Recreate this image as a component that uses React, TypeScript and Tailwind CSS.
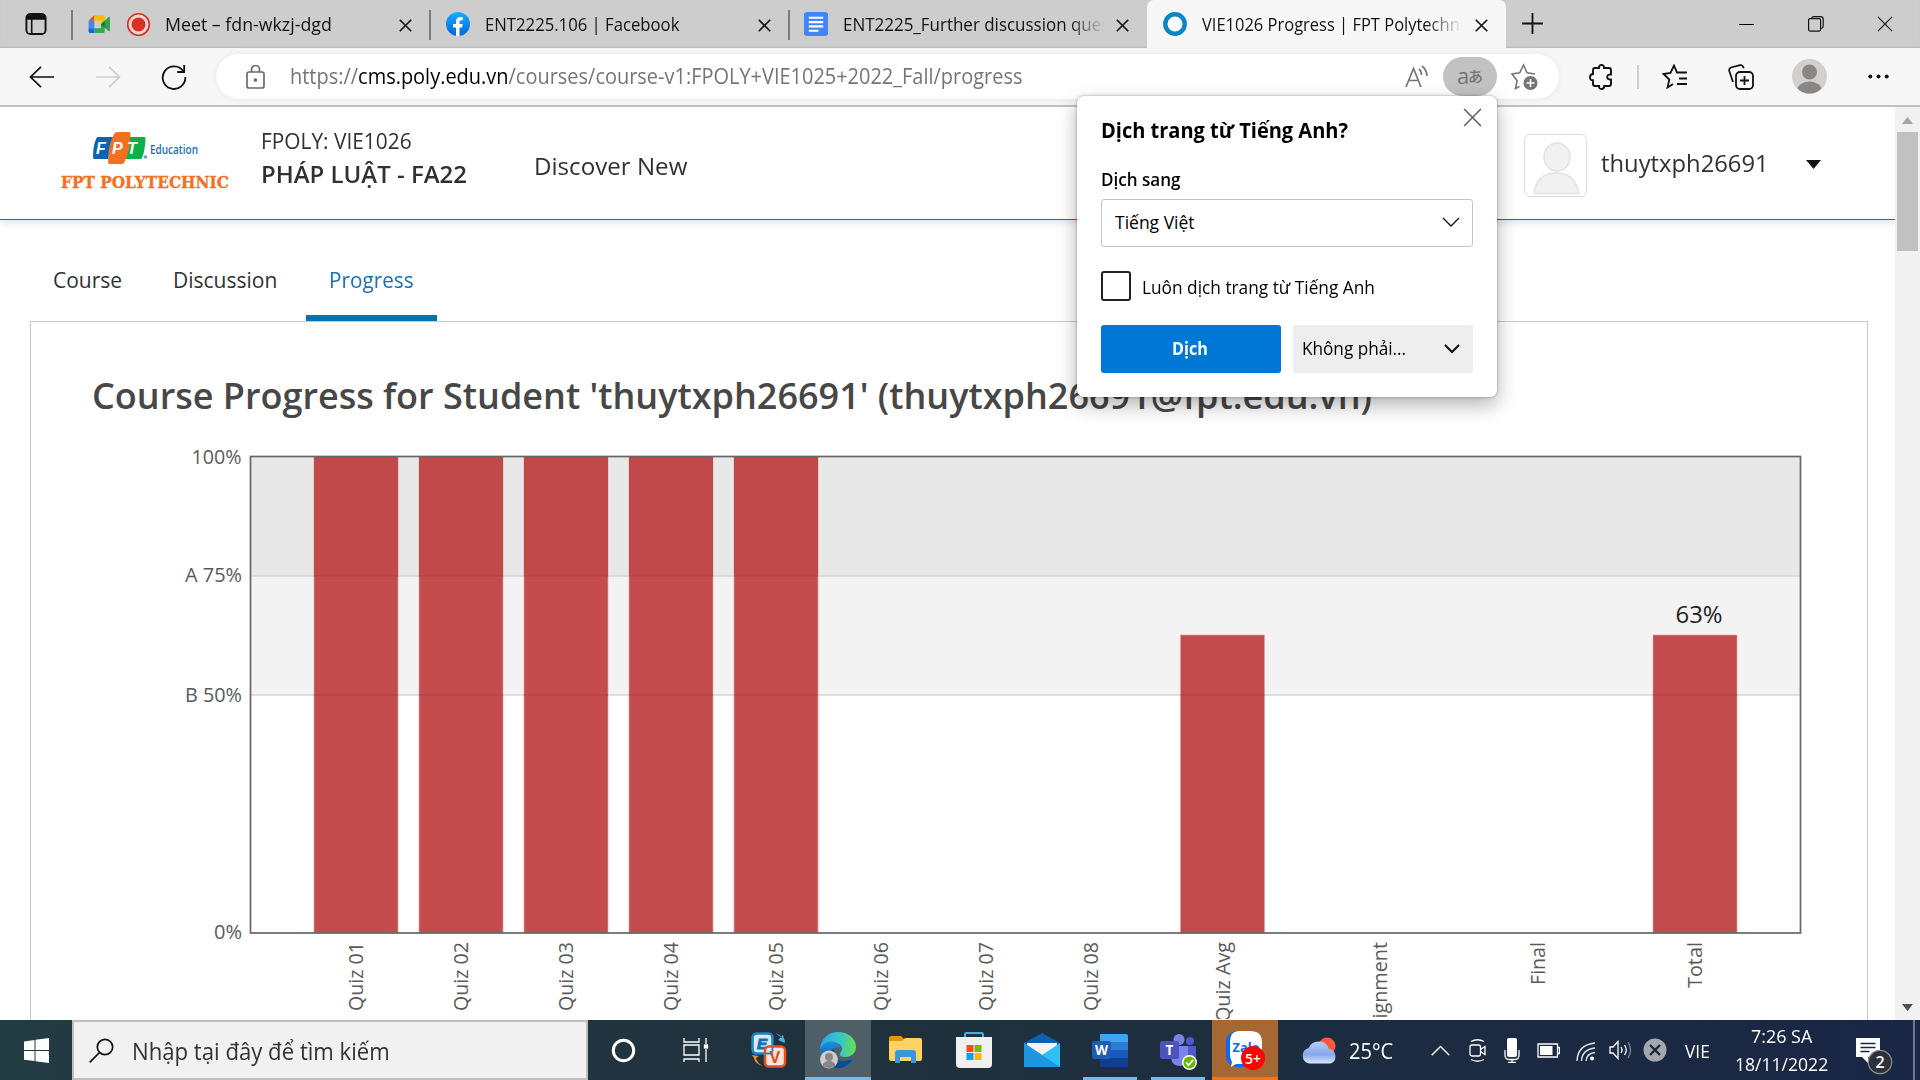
import React, { useLayoutEffect, useRef, useState } from "react";

/** Text on one line, condensed or stretched so that it takes exactly `w` pixels. */
function Fit({ w, className = "", children }: { w: number; className?: string; children: React.ReactNode }) {
  const ref = useRef<HTMLSpanElement>(null);
  const [scale, setScale] = useState(1);
  useLayoutEffect(() => {
    if (ref.current) setScale(w / ref.current.offsetWidth);
  }, [w]);
  return (
    <span className={`block shrink-0 whitespace-nowrap ${className}`} style={{ width: w }}>
      <span ref={ref} className="inline-block origin-left" style={{ transform: `scaleX(${scale})` }}>
        {children}
      </span>
    </span>
  );
}

function Cross({ size, sw = 1.8 }: { size: number; sw?: number }) {
  return (
    <svg width={size} height={size} viewBox="0 0 14 14" fill="none" stroke="currentColor" strokeWidth={sw}>
      <path d="M.8.8l12.4 12.4M13.2.8L.8 13.2" />
    </svg>
  );
}

function TabBar() {
  return (
    <div className="flex h-[48px] w-full shrink-0 bg-[#cdcdcd] text-[18.5px] leading-none text-[#111] shadow-[inset_0_-2px_2px_-1px_#b4b4b4]">
      <div className="flex w-[71px] items-center pl-[25px]">
        <svg width="22" height="22" viewBox="0 0 22 23" fill="none" stroke="#111" strokeWidth="2">
          <rect x="1" y="1" width="20" height="21" rx="4" />
          <path d="M6.5 6v16" strokeWidth="1.7" />
          <path d="M2 6V4q0-2 3-2h12q3 0 3 2v2z" fill="#111" />
        </svg>
      </div>
      <div className="flex w-[358px] items-center">
        <i className="h-[30px] mt-[2px] w-[1.500px] bg-[#7c7c7c]" />
        <svg className="ml-[15px]" width="23" height="19" viewBox="0 0 23 20">
          <path d="M0 6L6 0v6z" fill="#ea4335" />
          <path d="M6 0h9q2 0 2 2v5l-4 3V6H6z" fill="#fbbc04" />
          <path d="M0 6h6v8H0z" fill="#4285f4" />
          <path d="M0 14h6v5H2q-2 0-2-2z" fill="#1967d2" />
          <path d="M6 14h7v-4l4 3v4q0 2-2 2H6z" fill="#34a853" />
          <path d="M13 10l8-8q1.5-.6 1.5 1v13q0 1.600-1.500.8z" fill="#2fa34d" />
          <path d="M13 10l4-4v7.500z" fill="#15743a" />
        </svg>
        <svg className="ml-[15px]" width="25" height="25" viewBox="0 0 26 26">
          <circle cx="13" cy="13" r="11.200" fill="#f0d6d3" stroke="#d93025" strokeWidth="1.700" />
          <circle cx="13" cy="13" r="7.200" fill="#d93025" />
        </svg>
        <Fit w={167} className="ml-[14px]">Meet – fdn-wkzj-dgd</Fit>
        <span className="ml-auto mr-[17px] mt-[2px]"><Cross size={13} /></span>
      </div>
      <div className="flex w-[359px] items-center">
        <i className="h-[30px] mt-[2px] w-[1.500px] bg-[#7c7c7c]" />
        <svg className="ml-[15px]" width="24" height="24" viewBox="0 0 24 24">
          <defs>
            <linearGradient id="fb" x2="0" y2="1"><stop stopColor="#19aefb" /><stop offset="1" stopColor="#0563e0" /></linearGradient>
          </defs>
          <circle cx="12" cy="12" r="12" fill="url(#fb)" />
          <path d="M10 24v-8.400H7V12h3V9.600C10 6.500 11.800 5 14.500 5c.9 0 1.800.1 2.300.2v3.100h-1.500c-1.500 0-1.800.8-1.800 1.900V12h3.200l-.6 3.600h-2.600V24z" fill="#fff" />
        </svg>
        <Fit w={194} className="ml-[15px]">ENT2225.106 | Facebook</Fit>
        <span className="ml-auto mr-[17px] mt-[2px]"><Cross size={13} /></span>
      </div>
      <div className="flex w-[359px] items-center">
        <i className="h-[30px] mt-[2px] w-[1.500px] bg-[#7c7c7c]" />
        <svg className="ml-[14px]" width="24" height="24" viewBox="0 0 25 25">
          <rect width="25" height="25" rx="3" fill="#4285f4" />
          <path d="M5 6h15M5 10.500h15M5 15h15M5 19.500h10" stroke="#fff" strokeWidth="2.200" />
        </svg>
        <div className="ml-[15px] w-[262px] overflow-hidden py-[5px] [mask-image:linear-gradient(to_right,black_86%,transparent)]">
          <Fit w={266}>ENT2225_Further discussion ques</Fit>
        </div>
        <span className="ml-auto mr-[18px] mt-[2px]"><Cross size={13} /></span>
      </div>
      <div className="flex w-[359px] items-center rounded-t-[7px] bg-[#f7f7f7]">
        <svg className="ml-[16px]" width="24" height="24" viewBox="0 0 24 24">
          <circle cx="12" cy="12" r="9.700" fill="#fff" stroke="#0a86c4" strokeWidth="4.400" />
        </svg>
        <div className="ml-[15px] w-[260px] overflow-hidden py-[5px] [mask-image:linear-gradient(to_right,black_86%,transparent)]">
          <Fit w={262}>VIE1026 Progress | FPT Polytechni</Fit>
        </div>
        <span className="ml-auto mr-[18px] mt-[2px]"><Cross size={13} /></span>
      </div>
      <svg className="ml-[16px] mt-[13px]" width="21" height="21" viewBox="0 0 21 21" stroke="#111" strokeWidth="1.800">
        <path d="M10.500 0v21M0 10.500h21" />
      </svg>
      <div className="ml-auto flex items-center pr-[27px]">
        <i className="h-px w-[15px] bg-black" />
        <svg className="ml-[54px]" width="16" height="16" viewBox="0 0 16 16" fill="none" stroke="#111" strokeWidth="1.200">
          <rect x=".6" y="2.600" width="12" height="12.500" rx="1.500" />
          <path d="M3.500 2.500Q4 .6 6 .6h6.500q2.700 0 2.700 2.700V10q0 2-2 2.500" />
        </svg>
        <span className="ml-[53px]"><Cross size={16} sw={1} /></span>
      </div>
    </div>
  );
}

function Toolbar() {
  return (
    <div className="flex h-[59px] w-full shrink-0 items-center border-b-2 border-[#c0c0c0] bg-[#f7f7f7]">
      <svg className="ml-[29px]" width="26" height="22" viewBox="0 0 26 22" fill="none" stroke="#111" strokeWidth="1.700"><path d="M12 .8L1.500 11 12 21.200M1.500 11H25" /></svg>
      <svg className="ml-[40px]" width="26" height="22" viewBox="0 0 26 22" fill="none" stroke="#cfcfcf" strokeWidth="1.700"><path d="M14 .8L24.500 11 14 21.200M24.500 11H1" /></svg>
      <svg className="ml-[40px]" width="26" height="26" viewBox="0 0 26 26" fill="none" stroke="#111" strokeWidth="1.800"><path d="M22.500 7.500A11.300 11.300 0 1 0 24.300 13M23.200 1v7h-7" /></svg>
      <div className="ml-[29px] flex h-[45px] w-[1343px] items-center rounded-full bg-white text-[21px] leading-none text-[#757575] shadow-[0_0_6px_#e6e6e6]">
        <svg className="ml-[30px]" width="19" height="24" viewBox="0 0 19 24" fill="none" stroke="#6b6b6b" strokeWidth="1.700">
          <rect x="1" y="7" width="17" height="16" rx="2" /><path d="M5.500 7V4.500a4 4 0 0 1 8 0V7" /><circle cx="9.500" cy="15" r="1" fill="#555" />
        </svg>
        <Fit w={732} className="ml-[25px]">https://<span className="text-black">cms.poly.edu.vn</span>/courses/course-v1:FPOLY+VIE1025+2022_Fall/progress</Fit>
        <svg className="ml-auto" width="24" height="23" viewBox="0 0 24 23" fill="none" stroke="#757575" strokeWidth="1.700">
          <path d="M1 22L8.500 3.500 16 22M3.500 15.500h10M14 4q2.500 2 2.500 6M17 1q4.500 3.500 5 10" />
        </svg>
        <div className="ml-[14px] flex h-[39px] w-[54px] items-center justify-center rounded-[20px] bg-[#c2c2c2] font-['Open_Sans','Noto_Sans_CJK_JP',sans-serif] text-[#757575]">
          <span className="-mt-[3px] text-[22px]">a</span><span className="-ml-px text-[15px] font-medium">あ</span>
        </div>
        <svg className="ml-[14px] mr-[21px]" width="27" height="27" viewBox="0 0 27 27" fill="none" stroke="#757575" strokeWidth="1.600">
          <path d="M8.500 23.500l-4 2 1.600-7.800L1 11l7.700-1.200L12.500 2l3.600 7.800L24 11" />
          <circle cx="19.500" cy="20" r="7" fill="#757575" stroke="none" /><path d="M19.500 16v8M15.500 20h8" stroke="#fff" />
        </svg>
      </div>
      <svg className="ml-[30px]" width="24" height="26" viewBox="0 0 24 26" fill="none" stroke="#111" strokeWidth="1.900">
        <path d="M6 4h4q-.2-3 2.500-3T15 4h5q2 0 2 2v4.500q-3.800-.3-3.800 2.500t3.800 2.500V20q0 2-2 2h-4.800q0 3-2.700 3T10 22H6q-2 0-2-2v-3.800q-3 .2-3-2.900T4 10V6q0-2 2-2z" />
      </svg>
      <i className="ml-[24px] h-[24px] w-[1.500px] bg-[#cfcfcf]" />
      <svg className="ml-[23px]" width="26" height="25" viewBox="0 0 26 25" fill="none" stroke="#111" strokeWidth="1.800">
        <path d="M11 20l-5.500 3.500 1.800-8L1.500 10l7-1L12 1.500 15 8.500h10M17 14.500h8M15 20h10" />
      </svg>
      <svg className="ml-[40px]" width="26" height="26" viewBox="0 0 26 26" fill="none" stroke="#111" strokeWidth="1.800">
        <rect x="8" y="8" width="17" height="17" rx="4" /><path d="M16.500 12v9M12 16.500h9M5 18L1.300 7Q.7 4.500 3 3.500L12 1.200q2.700-.5 3.700 3" />
      </svg>
      <svg className="ml-[38px]" width="35" height="35" viewBox="0 0 35 35">
        <defs><clipPath id="av"><circle cx="17.500" cy="17.500" r="17" /></clipPath></defs>
        <circle cx="17.500" cy="17.500" r="17.500" fill="#d2d0ce" />
        <circle cx="17.500" cy="13" r="7.500" fill="#8a8683" /><ellipse cx="17.500" cy="32" rx="12.500" ry="9.500" fill="#8a8683" clipPath="url(#av)" />
      </svg>
      <svg className="ml-[41px]" width="21" height="5" viewBox="0 0 21 5" fill="#111"><circle cx="2.300" cy="2.500" r="2" /><circle cx="10.500" cy="2.500" r="2" /><circle cx="18.700" cy="2.500" r="2" /></svg>
    </div>
  );
}

function Logo() {
  return (
    <svg className="ml-[61px] mt-[24px] shrink-0" width="170" height="62" viewBox="61 131 170 62">
      <path d="M98 137h16l-6 22H94q-1 0-1-2 0-12 3.500-19 .5-1 1.500-1z" fill="#0966b3" />
      <path d="M130 137h14.500q1 0 1 2-.5 12-3.500 19-.5 1-2 1h-15z" fill="#0ab14b" />
      <path d="M118 132h11q1.500 0 1.500 2 0 17-6 28-.7 2-2.500 2h-12q-2 0-2-2 0-17 6-28 .8-2 4-2z" fill="#f37021" />
      <g fill="#fff" fontFamily="'Liberation Sans', sans-serif" fontWeight="700" fontStyle="italic" fontSize="16">
        <text x="96" y="154">F</text><text x="112" y="154">P</text><text x="127" y="154">T</text>
      </g>
      <circle cx="145.500" cy="157" r="1.800" fill="#5c9dcc" />
      <text x="150" y="154" fontFamily="'Open Sans', sans-serif" fontWeight="600" fontSize="12.500" fill="#1a6eb5" textLength="48" lengthAdjust="spacingAndGlyphs">Education</text>
      <text x="61" y="187.500" fontFamily="'DejaVu Serif', serif" fontWeight="700" fontSize="16.500" fill="#f37021" stroke="#f37021" strokeWidth=".3" textLength="168" lengthAdjust="spacingAndGlyphs">FPT POLYTECHNIC</text>
    </svg>
  );
}

function PageHeader() {
  return (
    <header className="relative flex h-[113px] shrink-0 items-start border-b border-[#1173b0] leading-none text-[#313131] shadow-[0_3px_8px_#e4e4e4]">
      <Logo />
      <div className="ml-[30px]">
        <Fit w={151} className="mt-[24px] text-[21px]">FPOLY: VIE1026</Fit>
        <Fit w={206} className="mt-[11px] text-[23.500px] font-semibold">PHÁP LUẬT - FA22</Fit>
      </div>
      <Fit w={153} className="ml-[67px] mt-[48px] text-[23.500px]">Discover New</Fit>
      <div className="ml-auto mt-[27px] h-[63px] w-[63px] rounded-[6px] border border-[#dcdcdc]">
        <svg width="61" height="61" viewBox="0 0 61 61" fill="#f1f1f1" stroke="#e2e2e2" strokeWidth="1.500">
          <ellipse cx="32" cy="22" rx="13" ry="14" /><path d="M9 58.500Q12 38 31 38t23 20.500z" />
        </svg>
      </div>
      <Fit w={168} className="ml-[14px] mt-[45px] text-[23.500px]">thuytxph26691</Fit>
      <svg className="ml-[37px] mr-[74px] mt-[53px]" width="15" height="9" viewBox="0 0 15 9"><path d="M0 0h15L7.500 9z" fill="#111" /></svg>
    </header>
  );
}

function CourseTabs() {
  return (
    <nav className="flex h-[101px] shrink-0 gap-[6px] pl-[30px] text-[21px] leading-none text-[#313131]">
      <span className="px-[23px] pt-[50px]"><Fit w={69}>Course</Fit></span>
      <span className="-ml-px px-[23px] pt-[50px]"><Fit w={104}>Discussion</Fit></span>
      <span className="border-b-[6px] border-[#0075b4] px-[23px] pt-[50px] text-[#1a72b0]"><Fit w={85}>Progress</Fit></span>
    </nav>
  );
}

const LABELS: [string, number, number][] = [
  ["Quiz 01", 363, 69], ["Quiz 02", 468, 69], ["Quiz 03", 573, 69], ["Quiz 04", 678, 69], ["Quiz 05", 783, 69],
  ["Quiz 06", 888, 69], ["Quiz 07", 993, 69], ["Quiz 08", 1098, 69], ["Quiz Avg", 1230, 80], ["Assignment", 1387, 108],
  ["Final", 1545, 43], ["Total", 1702, 46],
];
const BARS: [number, number][] = [[314, 457], [419, 457], [524, 457], [629, 457], [734, 457], [1180.500, 635], [1653, 635]];

function Chart() {
  return (
    <svg className="ml-[149px] mt-[26px] shrink-0" width="1640" height="579" viewBox="180 440 1640 579" fontFamily="'Open Sans', sans-serif" fontSize="19.500" fill="#5a5a5a">
      <rect x="250" y="457" width="1551" height="119" fill="#e8e8e8" />
      <rect x="250" y="576" width="1551" height="119" fill="#f3f3f3" />
      <path d="M250 576h1551M250 695h1551" stroke="#d6d6d6" strokeWidth="1.500" />
      {BARS.map(([x, y]) => (
        <g key={x}>
          <rect x={x} y={y} width="84" height={933 - y} fill={y < 500 ? "#c54c4c" : "#c44b4b"} stroke="#dca2a2" strokeWidth=".7" />
          {y < 500 && <rect x={x} y={y} width="84" height="119" fill="#c14949" />}
          {y < 500 && <path d={`M${x} 576h84`} stroke="#b84343" strokeWidth="1.500" />}
          <path d={`M${x} 695h84`} stroke="#b84343" strokeWidth="1.500" />
        </g>
      ))}
      <rect x="250.500" y="456.500" width="1550" height="476.500" fill="none" stroke="#666" strokeWidth="1.700" />
      <text x="191.500" y="464" textLength="50" lengthAdjust="spacingAndGlyphs">100%</text>
      <text x="185" y="582" textLength="57" lengthAdjust="spacingAndGlyphs">A 75%</text>
      <text x="185" y="702" textLength="57" lengthAdjust="spacingAndGlyphs">B 50%</text>
      <text x="214" y="939" textLength="28" lengthAdjust="spacingAndGlyphs">0%</text>
      <text x="1675.500" y="623" fontSize="23" fill="#222" textLength="47" lengthAdjust="spacingAndGlyphs">63%</text>
      {LABELS.map(([t, x, len]) => (
        <text key={t} transform={`translate(${x} ${942 + len}) rotate(-90)`} textLength={len} lengthAdjust="spacingAndGlyphs">{t}</text>
      ))}
    </svg>
  );
}

function Page() {
  return (
    <div className="flex h-[913px] w-full shrink-0 overflow-hidden bg-white">
      <div className="flex h-full w-[1895px] flex-col overflow-hidden">
        <PageHeader />
        <CourseTabs />
        <main className="ml-[30px] flex w-[1838px] grow flex-col overflow-hidden border-x border-t border-[#c8c8c8]">
          <h1 className="ml-[61px] mt-[56px] text-[36px] font-semibold leading-none text-[#474747]">
            <Fit w={1280}>Course Progress for Student 'thuytxph26691' (thuytxph26691@fpt.edu.vn)</Fit>
          </h1>
          <Chart />
        </main>
      </div>
      <div className="flex h-full w-[25px] flex-col items-center bg-[#f1f1f1]">
        <svg className="mt-[10px]" width="11" height="7" viewBox="0 0 11 7"><path d="M0 7h11L5.500 0z" fill="#a3a3a3" /></svg>
        <div className="mt-[8px] h-[119px] w-[21px] bg-[#c1c1c1]" />
        <svg className="mb-[9px] mt-auto" width="11" height="7" viewBox="0 0 11 7"><path d="M0 0h11L5.500 7z" fill="#505050" /></svg>
      </div>
    </div>
  );
}

function Chevron({ sw }: { sw: number }) {
  return <svg width="18" height="11" viewBox="0 0 18 11" fill="none" stroke="#111" strokeWidth={sw}><path d="M1 1l8 8 8-8" /></svg>;
}

function TranslatePopup() {
  return (
    <div className="absolute left-[1077px] top-[96px] flex h-[301px] w-[420px] flex-col rounded-[7px] bg-white pl-[24px] pr-[24px] leading-none text-black shadow-[0_8px_20px_rgba(0,0,0,.3),0_0_3px_rgba(0,0,0,.35)]">
      <div className="flex items-start justify-between">
        <Fit w={247} className="mt-[24px] text-[20.500px] font-bold">Dịch trang từ Tiếng Anh?</Fit>
        <span className="-mr-[9px] mt-[12px] text-[#555]"><Cross size={19} sw={1} /></span>
      </div>
      <Fit w={80} className="mt-[30px] h-[18px] text-[17.500px] font-semibold">Dịch sang</Fit>
      <div className="mt-[10px] flex h-[48px] items-center justify-between rounded-[3px] border-[1.500px] border-[#c4c4c4] pl-[13px] pr-[12px] text-[17.500px]">
        <Fit w={80}>Tiếng Việt</Fit>
        <Chevron sw={1.3} />
      </div>
      <div className="mt-[24px] flex items-center text-[17.500px]">
        <i className="h-[30px] w-[30px] rounded-[3px] border-[2px] border-[#222]" />
        <Fit w={233} className="ml-[11px] mt-[4px]">Luôn dịch trang từ Tiếng Anh</Fit>
      </div>
      <div className="mt-[24px] flex h-[48px] gap-[12px] text-[17.500px]">
        <div className="flex w-[180px] items-center justify-center rounded-[3px] bg-[#0078d7] pr-[2px] font-bold text-white"><Fit w={36}>Dịch</Fit></div>
        <div className="flex w-[180px] items-center justify-between rounded-[3px] bg-[#eee] pl-[9px] pr-[13px]"><Fit w={104}>Không phải...</Fit><svg width="16" height="10" viewBox="0 0 16 10" fill="none" stroke="#111" strokeWidth="2"><path d="M1 1l7 7 7-7" /></svg></div>
      </div>
    </div>
  );
}

function Taskbar() {
  return (
    <div className="flex h-[60px] w-full shrink-0 bg-linear-to-r from-[#233b42] via-[#1f303d] to-[#192645] leading-none text-white">
      <div className="flex w-[72px] items-center justify-center">
        <svg width="25" height="25" viewBox="0 0 25 25" fill="#fff"><path d="M0 3.500L10.500 2v10H0zM11.500 1.800L25 0v12H11.500zM0 13h10.500v10L0 21.700zM11.500 13H25v12l-13.500-1.800z" /></svg>
      </div>
      <div className="flex w-[516px] items-center border-2 border-[#bfbfbf] bg-[#f1f1f1] text-[#333]">
        <svg className="ml-[15px]" width="25" height="25" viewBox="0 0 25 25" fill="none" stroke="#111" strokeWidth="1.700"><circle cx="16" cy="9" r="7.700" /><path d="M10.500 14.500L.7 24.300" /></svg>
        <Fit w={258} className="ml-[18px] mt-[3px] text-[23px]">Nhập tại đây để tìm kiếm</Fit>
      </div>
      <div className="flex w-[71px] items-center justify-center">
        <svg width="25" height="25" viewBox="0 0 25 25"><circle cx="12.500" cy="12.500" r="10.200" fill="none" stroke="#fff" strokeWidth="3" /></svg>
      </div>
      <div className="flex w-[74px] items-center justify-center">
        <svg width="26" height="24" viewBox="0 0 26 24" fill="none" stroke="#fff" strokeWidth="1.300"><path d="M1 0v4h15V0M1 24v-3h15v3M1 7h15v10H1zM23 0v6M23 11v13" /><rect x="21.500" y="7" width="3" height="3" fill="#fff" /></svg>
      </div>
      <div className="flex w-[72px] items-center justify-center">
        <svg width="36" height="36" viewBox="0 0 36 36">
          <rect x="1.500" y="1.500" width="20" height="20" rx="4" fill="#d5ecf8" stroke="#1e83c4" strokeWidth="2.500" />
          <text x="6" y="17" fontFamily="'Liberation Sans', sans-serif" fontWeight="700" fontStyle="italic" fontSize="15" fill="#1670b5" stroke="#1670b5">E</text>
          <rect x="14" y="14.500" width="20" height="20" rx="4" fill="#fce5d8" stroke="#e8501e" strokeWidth="2.500" />
          <path d="M14 21.500h5q2.500 0 2.500-2.500v-4.500" fill="none" stroke="#2a86c2" strokeWidth="2" />
          <text x="18.500" y="30.500" fontFamily="'Liberation Sans', sans-serif" fontWeight="700" fontSize="16" fill="#e0461b">V</text>
          <path d="M24 1q8 2 9 10l1-3M27 8l7 3-2-8z" fill="#4bb2e8" />
          <path d="M1 23l7 1-3 2q1 5 7 8-8-2-9-8z" fill="#f59121" />
        </svg>
      </div>
      <div className="flex w-[66px] items-center justify-center border-b-[3px] border-[#76b9ed] bg-[#4f5f67] pt-[3px]">
        <svg width="38" height="38" viewBox="0 0 38 38">
          <defs>
            <linearGradient id="e1" x2="1"><stop stopColor="#27a4e8" /><stop offset=".55" stopColor="#35c7c7" /><stop offset="1" stopColor="#66e04f" /></linearGradient>
            <linearGradient id="e2" x2="0" y2="1"><stop stopColor="#1c8fdc" /><stop offset="1" stopColor="#0d4fa0" /></linearGradient>
          </defs>
          <path d="M1 18C2 7 10 1 19 1c11 0 18 7 18 15 0 7-6 10-11 10-6 0-6-3-4-5 3-5-1-9-6-9C9 12 4 13 1 18z" fill="url(#e1)" />
          <path d="M1 18c3-6 9-9 15-7 5 2 6 5 5 7-2-3-8-1-8 5 0 8 10 11 22 5-6 9-18 12-26 5-5-4-9-9-8-15z" fill="url(#e2)" />
          <path d="M15 17c-3 9 3 17 18 11-6 10-15 11-20 7-5-5-3-14 2-18z" fill="#0c4a96" />
          <circle cx="10" cy="28.500" r="9" fill="#cfcdcb" /><circle cx="10" cy="26" r="4" fill="#8a8683" /><path d="M3.500 34.500q1-4.500 6.500-4.500t6.500 4.500q-6 5-13 0z" fill="#8a8683" />
        </svg>
      </div>
      <div className="flex w-[69px] items-center justify-center">
        <svg width="33" height="28" viewBox="0 0 33 28">
          <path d="M0 2q0-2 2-2h10l3 3v5H0z" fill="#dd9b07" /><path d="M0 5h13l3-3h15q2 0 2 2v19q0 2-2 2H2q-2 0-2-2z" fill="#ffd261" />
          <path d="M6 27V17q0-3 3-3h15q3 0 3 3v10h-5v-6H11v6z" fill="#3a96dd" />
        </svg>
      </div>
      <div className="flex w-[67px] items-center justify-center">
        <svg width="36" height="36" viewBox="0 0 36 36">
          <path d="M9 7V2.500Q9 1 10.500 1h15Q27 1 27 2.500V7" fill="none" stroke="#35b5ea" strokeWidth="2" />
          <path d="M0 5h36v27q0 4-4 4H4q-4 0-4-4z" fill="#f0f0f0" />
          <path d="M10.500 13h7v7h-7z" fill="#f25022" /><path d="M18.500 13h7v7h-7z" fill="#7fba00" /><path d="M10.500 21h7v7h-7z" fill="#00a4ef" /><path d="M18.500 21h7v7h-7z" fill="#ffb900" />
        </svg>
      </div>
      <div className="flex w-[69px] items-center justify-center">
        <svg width="36" height="34" viewBox="0 0 36 34">
          <path d="M0 10L18 0l18 10v6H0z" fill="#0f5fb0" /><path d="M3 10h30v14H3z" fill="#f3f3f3" />
          <path d="M0 10l18 12 18-12v24H0z" fill="#2fc0f3" /><path d="M0 10l36 24H0z" fill="#1e97e0" />
        </svg>
      </div>
      <div className="flex w-[67px] flex-col items-center">
        <svg className="mt-[14px]" width="36" height="33" viewBox="0 0 36 33">
          <path d="M8 0h26q2 0 2 2v6H8z" fill="#41a5ee" /><path d="M8 8h28v8H8z" fill="#2b7cd3" /><path d="M8 16h28v8H8z" fill="#185abd" /><path d="M8 24h28v7q0 2-2 2H10q-2 0-2-2z" fill="#103f91" />
          <rect y="7" width="19" height="18" rx="2" fill="#1d5cb8" />
          <text x="3" y="21" fontFamily="'Open Sans', sans-serif" fontWeight="700" fontSize="13.500" fill="#fff">W</text>
        </svg>
        <i className="mt-auto h-[3px] w-[54px] bg-[#76b9ed]" />
      </div>
      <div className="flex w-[69px] flex-col items-center">
        <svg className="mt-[14px] ml-[1px]" width="37" height="37" viewBox="0 0 37 37">
          <circle cx="19" cy="5.500" r="5.500" fill="#7b83eb" /><circle cx="30" cy="7" r="4" fill="#5059c9" />
          <path d="M25 12h11v10q0 6-5 6h-6z" fill="#5059c9" /><path d="M11 12h17v12q0 8-8 8t-9-8z" fill="#7b83eb" />
          <rect y="7" width="19" height="18" rx="2" fill="#4b53bc" />
          <text x="5.500" y="21" fontFamily="'Open Sans', sans-serif" fontWeight="700" fontSize="13.500" fill="#fff">T</text>
          <circle cx="29.500" cy="28.500" r="7.500" fill="#fff" /><circle cx="29.500" cy="28.500" r="6" fill="#6bb700" /><path d="M26 28.500l2.500 2.700 4.500-5" fill="none" stroke="#fff" strokeWidth="1.800" />
        </svg>
        <i className="mt-auto h-[3px] w-[54px] bg-[#76b9ed]" />
      </div>
      <div className="flex w-[66px] items-center justify-center border-b-[3px] border-[#ff7300] bg-[#a76733] pt-[3px]">
        <svg className="ml-[1px]" width="40" height="40" viewBox="0 0 40 40">
          <rect x="0" y="1" width="34" height="36" rx="11" fill="#0f68f0" />
          <path d="M13 1h11q12 0 12 11v10q0 12-12 12H10l-5 3 1-5q-2-3-2-9V12Q4 1 13 1z" fill="#fff" />
          <text x="6.500" y="22" fontFamily="'Open Sans', sans-serif" fontWeight="700" fontSize="13" fill="#0f68f0" textLength="27" lengthAdjust="spacingAndGlyphs">Zalo</text>
          <circle cx="27" cy="28" r="12" fill="#fb0505" />
          <text x="19" y="34" fontFamily="'Open Sans', sans-serif" fontWeight="600" fontSize="15" fill="#fff" textLength="16" lengthAdjust="spacingAndGlyphs">5+</text>
        </svg>
      </div>
      <div className="flex grow items-center">
        <svg className="ml-[23px]" width="37" height="27" viewBox="0 0 37 27">
          <defs><linearGradient id="cl" x2="0" y2="1"><stop stopColor="#b5cdf7" /><stop offset=".6" stopColor="#86a9ec" /><stop offset="1" stopColor="#dbe6fb" /></linearGradient></defs>
          <circle cx="26" cy="9" r="8.500" fill="#fa5a3c" /><path d="M8 26.500a8 8 0 0 1-.5-15.500A11 11 0 0 1 28 12a7.500 7.500 0 0 1 1.500 14.500z" fill="url(#cl)" />
        </svg>
        <Fit w={44} className="ml-[11px] mt-[2px] text-[21px]">25°C</Fit>
        <svg className="ml-[38px]" width="19" height="11" viewBox="0 0 19 11" fill="none" stroke="#fff" strokeWidth="1.400"><path d="M.7 10.300L9.500 1.500l8.800 8.800" /></svg>
        <svg className="ml-[19px]" width="18" height="23" viewBox="0 0 18 23" fill="none" stroke="#fff" strokeWidth="1.300"><rect x="1" y="6" width="10.500" height="11" rx="2" /><path d="M11.500 10.500L16 7.500v8l-4.500-3M2 2.500q6.500-3.500 13 0M2 20.500q6.500 3.500 13 0" /></svg>
        <svg className="ml-[17px]" width="16" height="25" viewBox="0 0 16 25" fill="none" stroke="#fff" strokeWidth="1.300"><rect x="3" y="0" width="10" height="19" rx="2" fill="#fff" stroke="none" /><path d="M1 12v5q0 4.500 4 4.500h6q4 0 4-4.500v-5M8 21.500V24M4 24.300h8" /></svg>
        <svg className="ml-[17px]" width="23" height="15" viewBox="0 0 23 15" fill="none" stroke="#fff" strokeWidth="1.300"><path d="M1 1h19.500v13H1zM20.500 4.500h2v6h-2" /><path d="M3 3h12.500v9H3z" fill="#fff" stroke="none" /></svg>
        <svg className="ml-[16px] mt-[3px]" width="20" height="20" viewBox="0 0 20 20" fill="none" stroke="#dfe3e8" strokeWidth="1.400"><path d="M1 19Q1.500 3 19 1M5.500 19Q6 7.500 19 6M10 19q.5-7.500 9-8.500" /><circle cx="16" cy="16.500" r="2" fill="#fff" stroke="none" /></svg>
        <svg className="ml-[13px]" width="23" height="20" viewBox="0 0 23 20" fill="none" stroke="#fff" strokeWidth="1.300"><path d="M1 7h3l5-5.500v17L4 13H1zM12 7q2 3 0 6M15.500 5q3.500 5 0 10" /><path d="M19 2q5 8 0 16" stroke="#7e8796" /></svg>
        <svg className="ml-[11px]" width="24" height="24" viewBox="0 0 24 24"><circle cx="12" cy="12" r="11.500" fill="#a4a7ad" /><path d="M7 7l10 10M17 7L7 17" stroke="#1c2838" strokeWidth="2.400" /></svg>
        <Fit w={25} className="ml-[18px] mt-[1px] text-[18px]">VIE</Fit>
        <div className="ml-[25px] flex w-[93px] flex-col items-center gap-[9px] text-[18.500px]"><Fit w={61}>7:26 SA</Fit><Fit w={93}>18/11/2022</Fit></div>
        <svg className="ml-[28px] mt-[13px]" width="37" height="38" viewBox="0 0 37 38">
          <path d="M0 0h24v19H12v6l-6-6H0z" fill="#fff" /><path d="M4.500 5.500h15M4.500 9.500h15M4.500 13.500h9" stroke="#1a2744" strokeWidth="1.300" />
          <circle cx="24" cy="24" r="11.700" fill="#2e3139" stroke="#8d9097" strokeWidth="1.200" />
          <text x="24" y="29.500" textAnchor="middle" fontFamily="'Open Sans', sans-serif" fontWeight="600" fontSize="16" fill="#fff">2</text>
        </svg>
        <i className="ml-auto mr-[5px] h-[60px] w-[2px] bg-[#6d7587]" />
      </div>
    </div>
  );
}

export default function App() {
  return (
    <div className="relative flex h-[1080px] w-[1920px] flex-col overflow-hidden bg-white font-['Open_Sans','Noto_Sans',sans-serif]">
      <TabBar />
      <Toolbar />
      <Page />
      <TranslatePopup />
      <Taskbar />
    </div>
  );
}
